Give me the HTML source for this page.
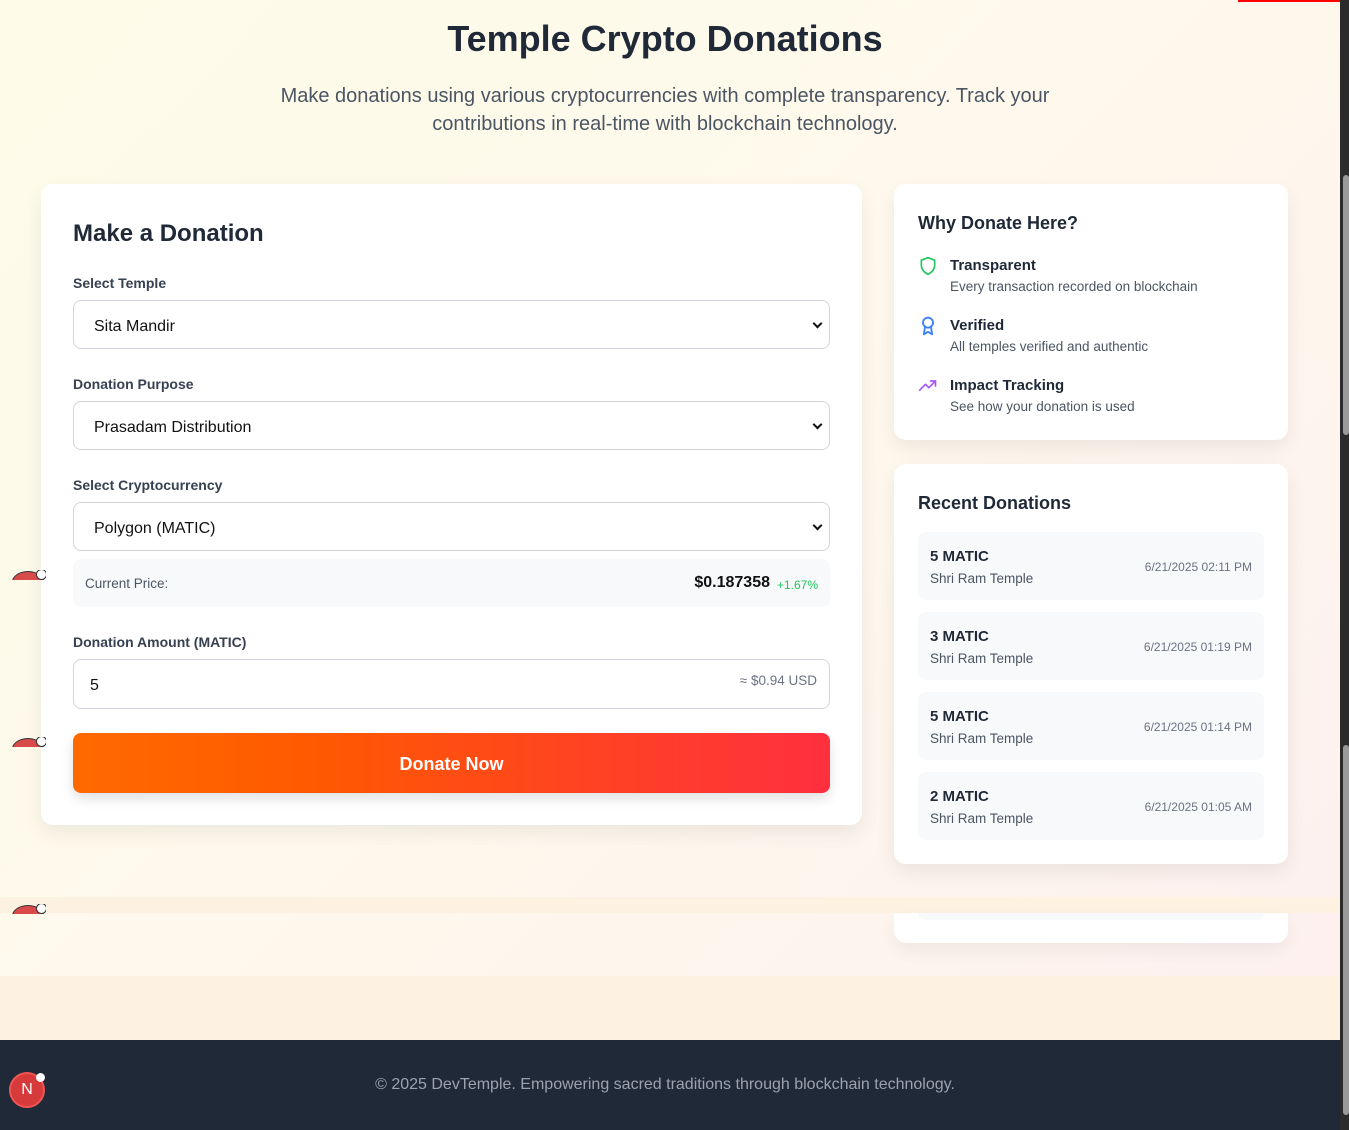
<!DOCTYPE html>
<html><head><meta charset="utf-8"><style>
*{box-sizing:border-box;margin:0;padding:0}
body{width:1349px;height:1130px;overflow:hidden;position:relative;font-family:"Liberation Sans","DejaVu Sans",sans-serif;color:#1f2937;background:#fdf1e2}
.a{position:absolute}
.bg{left:0;top:0;width:1340px;height:976px;background:linear-gradient(135deg,#fefbe9 0%,#fef9ec 50%,#fdf0ef 100%)}
.card{background:#fff;border-radius:12px;box-shadow:0 8px 20px rgba(0,0,0,0.07)}
.lbl{font-size:14px;font-weight:bold;color:#374151;left:32px}
.sel{left:32px;width:757px;height:49px;border:1px solid #d1d5db;border-radius:8px;font-size:16px;padding:2px 20px 0;line-height:47px;color:#111}
.dd:after{content:"";position:absolute;right:8px;top:19px;width:5px;height:5px;border-right:2px solid #111;border-bottom:2px solid #111;transform:rotate(45deg)}
.item{left:24px;width:346px;height:68px;background:#f8f9fb;border-radius:8px}
.item b{position:absolute;left:12px;top:16px;font-size:15px;color:#1f2937}
.item span{position:absolute;left:12px;top:39px;font-size:13.5px;color:#4b5563}
.item i{position:absolute;right:12px;top:28px;font-size:12px;font-style:normal;color:#6b7280}
.hat{left:10px;width:36px;height:10px;overflow:hidden}
.hat:before{content:"";position:absolute;left:2px;top:1px;width:30px;height:20px;border-radius:50%;background:#d94b4b;border:1px solid #333}
.hat:after{content:"";position:absolute;left:26px;top:-1px;width:9px;height:9px;border-radius:50%;background:#fff;border:1px solid #333}
</style></head><body>
<div class="a bg"></div>
<div class="a" style="left:1238px;top:0;width:102px;height:2px;background:#f00"></div>
<div class="a" style="left:1340px;top:0;width:9px;height:1130px;background:#2b2b2b"></div>
<div class="a" style="left:1343px;top:175px;width:6px;height:260px;background:#9a9a9a;border-radius:3px"></div>
<div class="a" style="left:1343px;top:745px;width:6px;height:370px;background:#9a9a9a;border-radius:3px"></div>

<div class="a" style="left:0;width:1330px;top:18px;text-align:center;font-size:36px;font-weight:bold;color:#1f2937">Temple Crypto Donations</div>
<div class="a" style="left:270px;width:790px;top:82px;text-align:center;font-size:20px;line-height:28px;color:#4b5563">Make donations using various cryptocurrencies with complete transparency. Track your contributions in real-time with blockchain technology.</div>

<div class="a card" style="left:41px;top:184px;width:821px;height:641px">
<div class="a" style="left:32px;top:36px;font-size:24px;font-weight:bold">Make a Donation</div>
<div class="a lbl" style="top:91px">Select Temple</div>
<div class="a sel dd" style="top:116px">Sita Mandir</div>
<div class="a lbl" style="top:192px">Donation Purpose</div>
<div class="a sel dd" style="top:217px">Prasadam Distribution</div>
<div class="a lbl" style="top:293px">Select Cryptocurrency</div>
<div class="a sel dd" style="top:318px">Polygon (MATIC)</div>
<div class="a" style="left:32px;top:375px;width:757px;height:48px;background:#f8f9fb;border-radius:8px">
<span class="a" style="left:12px;top:17px;font-size:13.5px;color:#4b5563">Current Price:</span>
<span class="a" style="right:60px;top:15px;font-size:16px;font-weight:bold;color:#111">$0.187358</span>
<span class="a" style="right:12px;top:19px;font-size:12px;color:#22c55e">+1.67%</span>
</div>
<div class="a lbl" style="top:450px">Donation Amount (MATIC)</div>
<div class="a sel" style="top:475px;height:50px;padding:2px 16px 0">5<span class="a" style="right:12px;top:-3px;font-size:13.5px;color:#6b7280">≈ $0.94 USD</span></div>
<div class="a" style="left:32px;top:549px;width:757px;height:60px;border-radius:8px;background:linear-gradient(90deg,#ff6a00 0%,#ff5a00 30%,#ff2f3f 100%);color:#fff;font-size:18px;font-weight:bold;text-align:center;line-height:62px;box-shadow:0 6px 12px rgba(0,0,0,0.12)">Donate Now</div>
</div>

<div class="a card" style="left:894px;top:184px;width:394px;height:256px">
<div class="a" style="left:24px;top:29px;font-size:18px;font-weight:bold">Why Donate Here?</div>
<svg class="a" style="left:24px;top:72px" width="20" height="20" viewBox="0 0 24 24" fill="none" stroke="#22c55e" stroke-width="2" stroke-linejoin="round"><path d="M12 2l8 3v6c0 5-3.5 9-8 11-4.5-2-8-6-8-11V5z"/></svg>
<div class="a" style="left:56px;top:73px;font-size:15px;font-weight:bold">Transparent</div>
<div class="a" style="left:56px;top:95px;font-size:13.5px;color:#4b5563">Every transaction recorded on blockchain</div>
<svg class="a" style="left:24px;top:132px" width="20" height="20" viewBox="0 0 24 24" fill="none" stroke="#3b82f6" stroke-width="2.2" stroke-linejoin="round"><circle cx="12" cy="8" r="6"/><path d="M8.5 13L7 22l5-3 5 3-1.5-9"/></svg>
<div class="a" style="left:56px;top:133px;font-size:15px;font-weight:bold">Verified</div>
<div class="a" style="left:56px;top:155px;font-size:13.5px;color:#4b5563">All temples verified and authentic</div>
<svg class="a" style="left:24px;top:192px" width="20" height="20" viewBox="0 0 24 24" fill="none" stroke="#a855f7" stroke-width="2" stroke-linecap="round" stroke-linejoin="round"><path d="M2 17l7-7 4 4 8-8M15 6h6v6"/></svg>
<div class="a" style="left:56px;top:193px;font-size:15px;font-weight:bold">Impact Tracking</div>
<div class="a" style="left:56px;top:215px;font-size:13.5px;color:#4b5563">See how your donation is used</div>
</div>

<div class="a card" style="left:894px;top:464px;width:394px;height:400px">
<div class="a" style="left:24px;top:29px;font-size:18px;font-weight:bold">Recent Donations</div>
<div class="a item" style="top:68px"><b>5 MATIC</b><span>Shri Ram Temple</span><i>6/21/2025 02:11 PM</i></div>
<div class="a item" style="top:148px"><b>3 MATIC</b><span>Shri Ram Temple</span><i>6/21/2025 01:19 PM</i></div>
<div class="a item" style="top:228px"><b>5 MATIC</b><span>Shri Ram Temple</span><i>6/21/2025 01:14 PM</i></div>
<div class="a item" style="top:308px"><b>2 MATIC</b><span>Shri Ram Temple</span><i>6/21/2025 01:05 AM</i></div>
</div>

<div class="a" style="left:0;top:897px;width:1340px;height:16px;background:#fdf1e2"></div>
<div class="a" style="left:894px;top:913px;width:394px;height:30px;background:#fff;border-radius:0 0 12px 12px;box-shadow:0 8px 16px rgba(0,0,0,0.05)"><div class="a" style="left:24px;top:0;width:346px;height:7px;background:#f8f9fb;border-radius:0 0 8px 8px"></div></div>

<div class="a hat" style="top:570px"></div>
<div class="a hat" style="top:737px"></div>
<div class="a hat" style="top:904px"></div>

<div class="a" style="left:0;top:1040px;width:1340px;height:90px;background:#1f2937"></div>
<div class="a" style="left:0;width:1330px;top:1076px;text-align:center;font-size:16px;color:#9ca3af">© 2025 DevTemple. Empowering sacred traditions through blockchain technology.</div>
<div class="a" style="left:9px;top:1072px;width:36px;height:36px;border-radius:50%;background:#d63a3a;border:2px solid #e55;color:#fff;font-size:16px;text-align:center;line-height:32px">N</div>
<div class="a" style="left:36px;top:1073px;width:9px;height:9px;border-radius:50%;background:#fff"></div>
</body></html>
